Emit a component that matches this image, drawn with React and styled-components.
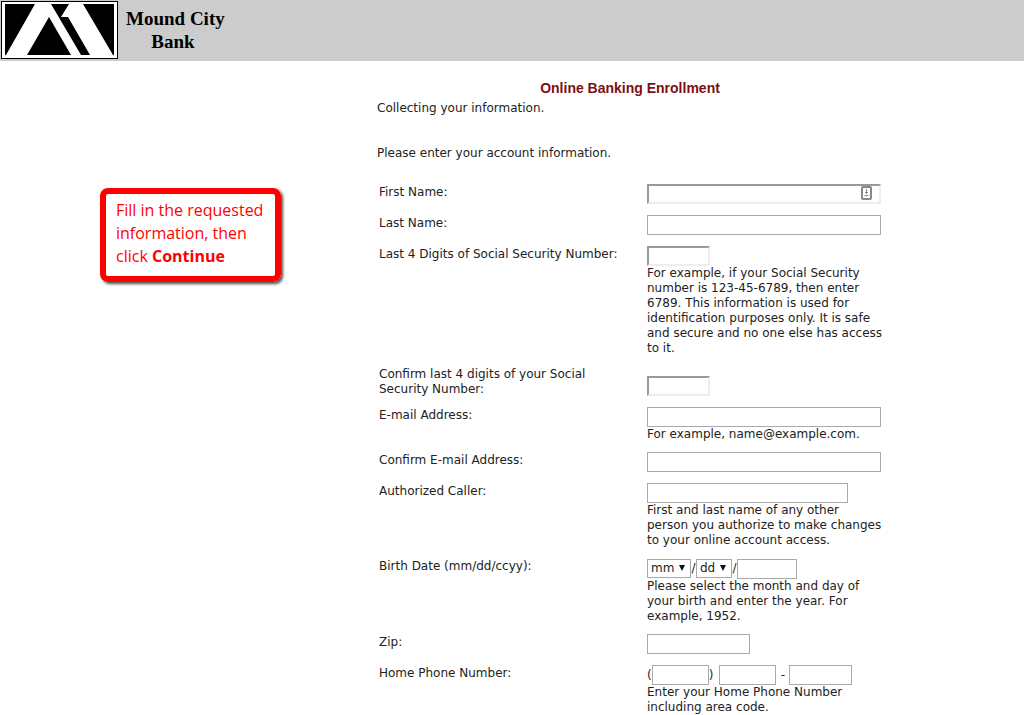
import React from 'react';
import styled, { createGlobalStyle } from 'styled-components';

const GlobalStyle = createGlobalStyle`
  * {
    box-sizing: border-box;
  }

  body {
    margin: 0;
    background-color: #fff;
    color: #222;
    font-family: "DejaVu Sans", Verdana, sans-serif;
    font-size: 12px;
    line-height: 15px;
  }
`;

const Header = styled.header`
  display: flex;
  align-items: flex-start;
  gap: 8px;
  height: 61px;
  background-color: #ccc;
`;

const BankName = styled.div`
  padding-top: 7px;
  color: #000;
  font-family: "Liberation Serif", "Times New Roman", serif;
  font-size: 19px;
  font-weight: bold;
  line-height: 23px;
  text-align: center;
`;

const Page = styled.div`
  display: grid;
  grid-template-columns: 377px minmax(0, 506px);
`;

const Side = styled.aside`
  padding: 127px 0 0 100px;
`;

const Callout = styled.p`
  width: 181px;
  margin: 0;
  padding: 5px 8px 8px 10px;
  border: 6px solid #f00;
  border-radius: 8px;
  box-shadow: 2px 2px 3px rgba(0, 0, 0, .7);
  color: #f00;
  font-family: "Open Sans", "Segoe UI", sans-serif;
  font-size: 16px;
  line-height: 23px;
`;

const Main = styled.main`
  padding-top: 17px;
`;

const Title = styled.h1`
  margin: 0 0 2px;
  color: #7b1015;
  font-family: "Liberation Sans", Arial, sans-serif;
  font-size: 14px;
  font-weight: bold;
  line-height: 21px;
  text-align: center;
`;

const Intro = styled.p`
  margin: 0 0 30px;
`;

const Form = styled.form`
  display: grid;
  gap: 11px;
  margin-top: -7px;
  padding-left: 2px;
`;

const Row = styled.div`
  display: grid;
  grid-template-columns: 268px minmax(0, 1fr);
  align-items: ${({ $end }) => ($end ? 'end' : 'start')};
`;

const Label = styled.label`
  max-width: 244px;
  margin: 1px 0 -1px;
`;

const Controls = styled.div`
  display: flex;
  align-items: center;
  position: relative;
`;

const Input = styled.input`
  width: ${({ $width }) => $width}px;
  height: 20px;
  padding: 1px 4px;
  border: ${({ $inset }) => ($inset ? '2px inset #eee' : '1px solid #aaa')};
  border-radius: 0;
  background-color: #fff;
  font: inherit;
`;

const SelectBox = styled.span`
  display: flex;
  position: relative;
`;

const Select = styled.select`
  width: ${({ $width }) => $width}px;
  height: 19px;
  padding: 0 3px;
  appearance: none;
  border: 1px solid #aaa;
  border-radius: 0;
  background-color: #fff;
  color: #222;
  font: inherit;
`;

const Arrow = styled.svg`
  position: absolute;
  top: 6px;
  right: 6px;
  pointer-events: none;
`;

const Help = styled.p`
  margin: 0 0 -1px;
`;

const DateControls = styled(Controls)`
  height: 21px;
`;

const Slash = styled.span`
  width: 5px;
  text-align: center;
`;

const Dash = styled.span`
  width: 13px;
  text-align: center;
`;

const Gap = styled.span`
  width: 6px;
`;

const FillIcon = styled.svg`
  position: absolute;
  top: 2px;
  left: 214px;
`;

const Logo = () => (
    <svg width="118" height="59" viewBox="0 0 118 59" role="img" aria-label="Mound City Bank logo">
        <rect x="1.5" y="1.5" width="116" height="57" fill="#fff" stroke="#000" />
        <rect x="5" y="4" width="109" height="51" fill="#000" />
        <path fill="#fff" d="M35 4H51L81 55H71L49 17L27 55H6ZM69 4H83L113 55H90L68 17H61Z" />
    </svg>
);

const DropDown = ({ width, label, placeholder, id }) => (
    <SelectBox>
        <Select id={id} $width={width} aria-label={label}>
            <option>{placeholder}</option>
        </Select>
        <Arrow width="6" height="6" viewBox="0 0 6 6" aria-hidden="true">
            <path d="M0 0H6L3 6Z" fill="#111" />
        </Arrow>
    </SelectBox>
);

const Field = ({ id, label, help, end, children }) => (
    <Row $end={end}>
        <Label htmlFor={id}>{label}</Label>
        <div>
            {children}
            {help && <Help>{help}</Help>}
        </div>
    </Row>
);

const TextField = ({ id, width = 234, inset, icon, ...rest }) => (
    <Field id={id} {...rest}>
        <Controls>
            <Input id={id} type="text" $width={width} $inset={inset} />
            {icon}
        </Controls>
    </Field>
);

const App = () => {
    return (
        <>
            <GlobalStyle />
            <Header>
                <Logo />
                <BankName>Mound City<br />Bank&nbsp;</BankName>
            </Header>
            <Page>
                <Side>
                    <Callout>
                        Fill in the requested information, then click <strong>Continue</strong>
                    </Callout>
                </Side>
                <Main>
                    <Title>Online Banking Enrollment</Title>
                    <Intro>Collecting your information.</Intro>
                    <Intro>Please enter your account information.</Intro>
                    <Form>
                        <TextField
                            id="first"
                            label="First Name:"
                            inset
                            icon={
                                <FillIcon width="11" height="14" viewBox="0 0 11 14" aria-hidden="true">
                                    <rect x="1" y="1" width="9" height="12" rx="1" fill="#fff" stroke="#888" strokeWidth="2" />
                                    <path d="M5.5 3V8M4 6.5H7M3.5 9.5H7.5" stroke="#888" fill="none" />
                                </FillIcon>
                            }
                        />
                        <TextField id="last" label="Last Name:" />
                        <TextField
                            id="ssn"
                            label="Last 4 Digits of Social Security Number:"
                            width={63}
                            inset
                            help="For example, if your Social Security number is 123-45-6789, then enter 6789. This information is used for identification purposes only. It is safe and secure and no one else has access to it."
                        />
                        <TextField
                            id="ssn2"
                            label="Confirm last 4 digits of your Social Security Number:"
                            width={63}
                            inset
                            end
                        />
                        <TextField id="email" label="E-mail Address:" help="For example, name@example.com." />
                        <TextField id="email2" label="Confirm E-mail Address:" />
                        <TextField
                            id="caller"
                            label="Authorized Caller:"
                            width={201}
                            help="First and last name of any other person you authorize to make changes to your online account access."
                        />
                        <Field
                            id="month"
                            label="Birth Date (mm/dd/ccyy):"
                            help="Please select the month and day of your birth and enter the year. For example, 1952."
                        >
                            <DateControls>
                                <DropDown id="month" width={44} label="Birth month" placeholder="mm" />
                                <Slash>/</Slash>
                                <DropDown id="day" width={36} label="Birth day" placeholder="dd" />
                                <Slash>/</Slash>
                                <Input type="text" $width={60} aria-label="Birth year" />
                            </DateControls>
                        </Field>
                        <TextField id="zip" label="Zip:" width={103} />
                        <Field
                            id="area"
                            label="Home Phone Number:"
                            help="Enter your Home Phone Number including area code."
                        >
                            <Controls>
                                (
                                <Input id="area" type="text" $width={57} />
                                )
                                <Gap />
                                <Input type="text" $width={57} aria-label="Phone prefix" />
                                <Dash>-</Dash>
                                <Input type="text" $width={63} aria-label="Phone line number" />
                            </Controls>
                        </Field>
                    </Form>
                </Main>
            </Page>
        </>
    );
};

export default App;
